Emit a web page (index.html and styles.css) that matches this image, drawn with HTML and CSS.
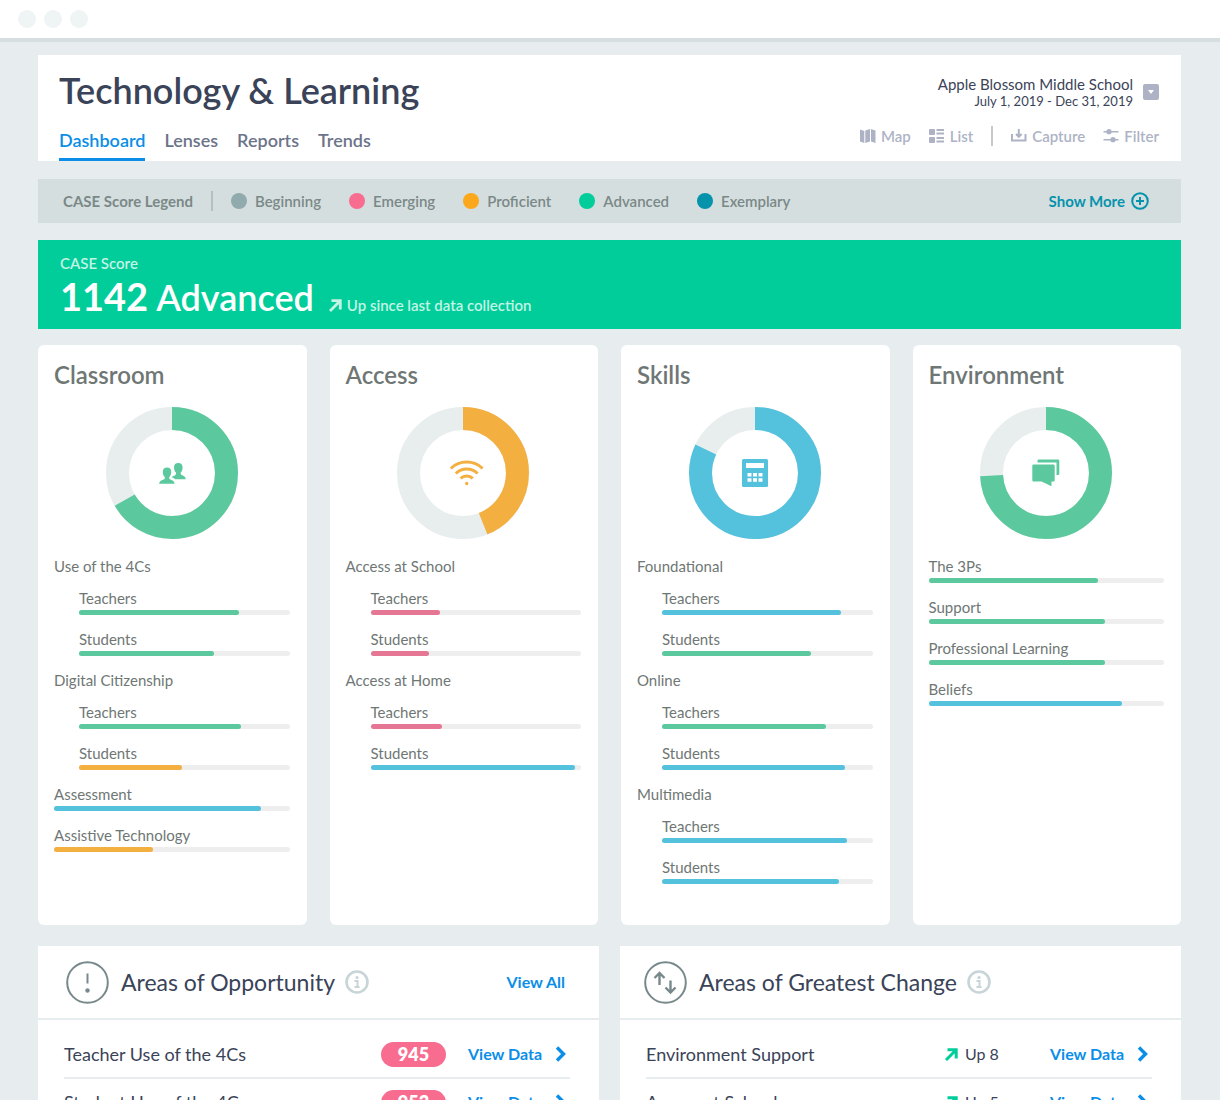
FILE: index.html
```
<!DOCTYPE html>
<html lang="en">
<head>
  <meta charset="UTF-8">
  <meta name="viewport" content="width=device-width, initial-scale=1">
  <title>Technology &amp; Learning - Dashboard</title>
  <link rel="stylesheet" href="styles.css">
</head>
<body>
  <div class="window-bar">
    <span class="window-dot"></span>
    <span class="window-dot"></span>
    <span class="window-dot"></span>
  </div>
  <div class="page">
    <header class="page-header">
      <div class="header-left">
        <h1>Technology &amp; Learning</h1>
        <nav class="tabs">
          <a class="active" href="#">Dashboard</a>
          <a href="#">Lenses</a>
          <a href="#">Reports</a>
          <a href="#">Trends</a>
        </nav>
      </div>
      <div class="header-right">
        <div class="school">
          <div class="school-text">
            <div class="school-name">Apple Blossom Middle School</div>
            <div class="school-dates">July 1, 2019 - Dec 31, 2019</div>
          </div>
          <button class="school-button" type="button" aria-label="Change school">
            <svg width="16" height="16" viewBox="0 0 16 16"><path d="M5 6h6l-3 4z" fill="#fff"/></svg>
          </button>
        </div>
        <div class="tools">
          <button type="button">
            <svg width="16" height="14" viewBox="0 0 16 14" fill="currentColor"><path d="M0 0.5L4.3 2v12L0 12.5zM5.3 1.5L10 0v12.5L5.3 14zM11 0l4.5 1.5V14L11 12.5z"/></svg>
            Map
          </button>
          <button type="button">
            <svg width="16" height="14" viewBox="0 0 16 14" fill="currentColor"><rect width="6" height="6" rx="1"/><rect y="8" width="6" height="6" rx="1"/><path d="M7.5 0H15v2H7.5zM7.5 3.5H15v2H7.5zM7.5 8H15v2H7.5zM7.5 11.5H15v2H7.5z"/></svg>
            List
          </button>
          <span class="tools-divider"></span>
          <button type="button">
            <svg width="16" height="14" viewBox="0 0 16 14" fill="none" stroke="currentColor" stroke-width="2"><path d="M1 5v6.500h13.500V5M7.800 0v7.500M5 5l2.800 2.800L10.600 5"/></svg>
            Capture
          </button>
          <button type="button">
            <svg width="16" height="14" viewBox="0 0 16 14" fill="currentColor"><path d="M0.500 2h15v1.600h-15zM0.500 10h15v1.600h-15z"/><circle cx="6" cy="2.700" r="2.600"/><circle cx="10" cy="10.700" r="2.600"/></svg>
            Filter
          </button>
        </div>
      </div>
    </header>

    <section class="legend">
      <span class="legend-title">CASE Score Legend</span>
      <ul class="legend-list">
        <li><span class="legend-dot beginning"></span>Beginning</li>
        <li><span class="legend-dot emerging"></span>Emerging</li>
        <li><span class="legend-dot proficient"></span>Proficient</li>
        <li><span class="legend-dot advanced"></span>Advanced</li>
        <li><span class="legend-dot exemplary"></span>Exemplary</li>
      </ul>
      <button class="show-more" type="button">
        Show More
        <svg width="18" height="18" viewBox="0 0 18 18" fill="none" stroke="currentColor" stroke-width="2"><circle cx="9" cy="9" r="7.8"/><path d="M9 5v8M5 9h8"/></svg>
      </button>
    </section>

    <section class="score">
      <div class="score-label">CASE Score</div>
      <div class="score-line">
        <span class="score-number">1142</span>
        <span class="score-level">Advanced</span>
        <span class="score-trend"><svg width="13" height="13" viewBox="0 0 13 13" fill="none" stroke="currentColor" stroke-width="2.800"><path d="M1 12l9.500-9.500M2.500 1.700h8.800V10.500"/></svg>Up since last data collection</span>
      </div>
    </section>

    <section class="cards">
      <article class="card">
        <h2>Classroom</h2>
        <svg class="donut c-green" viewBox="0 0 132 132">
          <circle class="donut-track" cx="66" cy="66" r="54.5"/>
          <circle class="donut-value" cx="66" cy="66" r="54.5" pathLength="100" stroke-dasharray="66.7 100" transform="rotate(-90 66 66)"/>
          <path fill="currentColor" d="M61 60.500c2.600 0 4.200 1.500 4.200 4.200 0 2.500-.8 4.300-1.900 5.400v1.400c.4 1.500 5.200 1.500 5.200 5.200H53.200c0-3.700 5.200-3.700 5.600-5.200v-1.400c-1.200-1.100-2-2.900-2-5.400 0-2.700 1.600-4.200 4.200-4.200z"/>
          <path fill="currentColor" d="M72.300 56c2.700 0 4.300 1.500 4.300 4.200 0 2.500-.8 4.300-1.900 5.400V67c.4 1.500 5 1.500 5 5.200H69c-.7-1-2-1.600-3.500-2 1.500-1.300 4.200-1.700 4.500-3.200v-1.400c-1.200-1.100-2-2.900-2-5.400 0-2.700 1.600-4.200 4.300-4.200z"/>
        </svg>
        <div class="metrics">
          <div class="group">
            <h3>Use of the 4Cs</h3>
            <div class="metric"><span>Teachers</span><div class="bar c-green"><i style="width: 76%"></i></div></div>
            <div class="metric"><span>Students</span><div class="bar c-green"><i style="width: 64%"></i></div></div>
          </div>
          <div class="group">
            <h3>Digital Citizenship</h3>
            <div class="metric"><span>Teachers</span><div class="bar c-green"><i style="width: 77%"></i></div></div>
            <div class="metric"><span>Students</span><div class="bar c-orange"><i style="width: 49%"></i></div></div>
          </div>
          <div class="metric"><span>Assessment</span><div class="bar c-blue"><i style="width: 88%"></i></div></div>
          <div class="metric"><span>Assistive Technology</span><div class="bar c-orange"><i style="width: 42%"></i></div></div>
        </div>
      </article>

      <article class="card">
        <h2>Access</h2>
        <svg class="donut c-orange" viewBox="0 0 132 132">
          <circle class="donut-track" cx="66" cy="66" r="54.5"/>
          <circle class="donut-value" cx="66" cy="66" r="54.5" pathLength="100" stroke-dasharray="44 100" transform="rotate(-90 66 66)"/>
          <g fill="none" stroke="currentColor" stroke-width="3">
            <path d="M53.800 61.500a23 23 0 0 1 31.800 0M58.800 66.500a15.500 15.500 0 0 1 21.800 0M63.600 71.300a9 9 0 0 1 12.200 0"/>
          </g>
          <circle cx="69.700" cy="76.500" r="1.700" fill="currentColor"/>
        </svg>
        <div class="metrics">
          <div class="group">
            <h3>Access at School</h3>
            <div class="metric"><span>Teachers</span><div class="bar c-pink"><i style="width: 33%"></i></div></div>
            <div class="metric"><span>Students</span><div class="bar c-pink"><i style="width: 28%"></i></div></div>
          </div>
          <div class="group">
            <h3>Access at Home</h3>
            <div class="metric"><span>Teachers</span><div class="bar c-pink"><i style="width: 34%"></i></div></div>
            <div class="metric"><span>Students</span><div class="bar c-blue"><i style="width: 97%"></i></div></div>
          </div>
        </div>
      </article>

      <article class="card">
        <h2>Skills</h2>
        <svg class="donut c-blue" viewBox="0 0 132 132">
          <circle class="donut-track" cx="66" cy="66" r="54.5"/>
          <circle class="donut-value" cx="66" cy="66" r="54.5" pathLength="100" stroke-dasharray="82.1 100" transform="rotate(-90 66 66)"/>
          <rect x="53" y="52" width="26" height="28" rx="1.500" fill="currentColor"/>
          <path fill="#fff" d="M57 56h18v5H57zM58.500 66h4v3.500h-4zM64 66h4v3.500h-4zM69.500 66h4v3.500h-4zM58.500 71.300h4v3.500h-4zM64 71.300h4v3.500h-4zM69.500 71.300h4v3.500h-4z"/>
        </svg>
        <div class="metrics">
          <div class="group">
            <h3>Foundational</h3>
            <div class="metric"><span>Teachers</span><div class="bar c-blue"><i style="width: 85%"></i></div></div>
            <div class="metric"><span>Students</span><div class="bar c-green"><i style="width: 71%"></i></div></div>
          </div>
          <div class="group">
            <h3>Online</h3>
            <div class="metric"><span>Teachers</span><div class="bar c-green"><i style="width: 78%"></i></div></div>
            <div class="metric"><span>Students</span><div class="bar c-blue"><i style="width: 87%"></i></div></div>
          </div>
          <div class="group">
            <h3>Multimedia</h3>
            <div class="metric"><span>Teachers</span><div class="bar c-blue"><i style="width: 88%"></i></div></div>
            <div class="metric"><span>Students</span><div class="bar c-blue"><i style="width: 84%"></i></div></div>
          </div>
        </div>
      </article>

      <article class="card">
        <h2>Environment</h2>
        <svg class="donut c-green" viewBox="0 0 132 132">
          <circle class="donut-track" cx="66" cy="66" r="54.5"/>
          <circle class="donut-value" cx="66" cy="66" r="54.5" pathLength="100" stroke-dasharray="74.2 100" transform="rotate(-90 66 66)"/>
          <path fill="currentColor" d="M53.500 57.500h20a1.200 1.200 0 0 1 1.200 1.200v14.600a1.200 1.200 0 0 1-1.200 1.200H71.500v4.800l-10-4.800h-8a1.200 1.200 0 0 1-1.200-1.200V58.700a1.200 1.200 0 0 1 1.200-1.200z"/>
          <path fill="currentColor" d="M57.500 55.500v-1.800a1.200 1.200 0 0 1 1.200-1.200h19.400a1.200 1.200 0 0 1 1.200 1.200v13a1.200 1.200 0 0 1-1.200 1.200H76.500V55.500z"/>
        </svg>
        <div class="metrics">
          <div class="metric"><span>The 3Ps</span><div class="bar c-green"><i style="width: 72%"></i></div></div>
          <div class="metric"><span>Support</span><div class="bar c-green"><i style="width: 75%"></i></div></div>
          <div class="metric"><span>Professional Learning</span><div class="bar c-green"><i style="width: 75%"></i></div></div>
          <div class="metric"><span>Beliefs</span><div class="bar c-blue"><i style="width: 82%"></i></div></div>
        </div>
      </article>
    </section>

    <section class="panels">
      <article class="panel">
        <div class="panel-head">
          <svg class="panel-icon" viewBox="0 0 43 43" fill="none" stroke="currentColor" stroke-width="2"><circle cx="21.500" cy="21.500" r="20.300"/><path d="M21.500 12.500v10"/><circle cx="21.500" cy="29.500" r="2.200" fill="currentColor" stroke="none"/></svg>
          <h2>Areas of Opportunity</h2>
          <button class="info" type="button" aria-label="About areas of opportunity">
            <svg width="24" height="24" viewBox="0 0 24 24" fill="none" stroke="currentColor"><circle cx="12" cy="12" r="10.500" stroke-width="2.600"/><path d="M9.500 11h3v6M9.500 17h5" stroke-width="2"/><circle cx="12" cy="7.500" r="1.600" fill="currentColor" stroke="none"/></svg>
          </button>
          <a class="view-all" href="#">View All</a>
        </div>
        <ul class="rows">
          <li>
            <span class="row-name">Teacher Use of the 4Cs</span>
            <span class="pill">945</span>
            <a class="view-data" href="#">View Data
              <svg width="12" height="16" viewBox="0 0 12 16" fill="none" stroke="currentColor" stroke-width="3.400"><path d="M2 1.500L8.500 8 2 14.500"/></svg></a>
          </li>
          <li>
            <span class="row-name">Student Use of the 4Cs</span>
            <span class="pill">953</span>
            <a class="view-data" href="#">View Data
              <svg width="12" height="16" viewBox="0 0 12 16" fill="none" stroke="currentColor" stroke-width="3.400"><path d="M2 1.500L8.500 8 2 14.500"/></svg></a>
          </li>
        </ul>
      </article>

      <article class="panel">
        <div class="panel-head">
          <svg class="panel-icon" viewBox="0 0 43 43" fill="none" stroke="currentColor" stroke-width="2"><circle cx="21.500" cy="21.500" r="20.300"/><path d="M15.500 24V12.500M10.500 17l5-5 5 5M26.500 19.500V31M21.500 26.500l5 5 5-5" stroke-width="2.400"/></svg>
          <h2>Areas of Greatest Change</h2>
          <button class="info" type="button" aria-label="About areas of greatest change">
            <svg width="24" height="24" viewBox="0 0 24 24" fill="none" stroke="currentColor"><circle cx="12" cy="12" r="10.500" stroke-width="2.600"/><path d="M9.500 11h3v6M9.500 17h5" stroke-width="2"/><circle cx="12" cy="7.500" r="1.600" fill="currentColor" stroke="none"/></svg>
          </button>
        </div>
        <ul class="rows">
          <li>
            <span class="row-name">Environment Support</span>
            <span class="change">
              <svg width="13" height="13" viewBox="0 0 13 13" fill="none" stroke="currentColor" stroke-width="3"><path d="M1 12l9.500-9.500M2.500 1.800h8.700V10.500"/></svg>
              Up 8</span>
            <a class="view-data" href="#">View Data
              <svg width="12" height="16" viewBox="0 0 12 16" fill="none" stroke="currentColor" stroke-width="3.400"><path d="M2 1.500L8.500 8 2 14.500"/></svg></a>
          </li>
          <li>
            <span class="row-name">Access at School</span>
            <span class="change">
              <svg width="13" height="13" viewBox="0 0 13 13" fill="none" stroke="currentColor" stroke-width="3"><path d="M1 12l9.500-9.500M2.500 1.800h8.700V10.500"/></svg>
              Up 5</span>
            <a class="view-data" href="#">View Data
              <svg width="12" height="16" viewBox="0 0 12 16" fill="none" stroke="currentColor" stroke-width="3.400"><path d="M2 1.500L8.500 8 2 14.500"/></svg></a>
          </li>
        </ul>
      </article>
    </section>
  </div>
</body>
</html>
```
FILE: styles.css
```
* {
  box-sizing: border-box;
}
body {
  margin: 0;
  height: 100vh;
  overflow: hidden;
  background-color: #e7edef;
  color: #3a4358;
  font-family: Lato, "Liberation Sans", sans-serif;
  font-size: 15px;
  line-height: 20px;
}
h1, h2, h3, ul {
  margin: 0;
  padding: 0;
}
ul {
  list-style: none;
}
a {
  text-decoration: none;
}
button {
  padding: 0;
  border: none;
  background: none;
  color: inherit;
  font: inherit;
  cursor: pointer;
}
svg {
  display: block;
  flex: none;
}

/* Window bar */
.window-bar {
  display: flex;
  align-items: center;
  gap: 8px;
  height: 42px;
  padding: 0 18px;
  background-color: #fff;
  border-bottom: 4px solid #d7dedf;
}
.window-dot {
  width: 18px;
  height: 18px;
  border-radius: 50%;
  background-color: #eff4f5;
}

.page {
  padding: 13px 39px 0 38px;
}

/* Header */
.page-header {
  display: flex;
  justify-content: space-between;
  padding: 15px 22px 0 21px;
  background-color: #fff;
}
.page-header h1 {
  font-size: 36px;
  font-weight: 600;
  line-height: 40px;
}
.tabs {
  display: flex;
  gap: 19px;
  margin-top: 20px;
}
.tabs a {
  padding-bottom: 8px;
  border-bottom: 3px solid transparent;
  color: #6c7489;
  font-size: 18px;
  font-weight: 600;
}
.tabs a.active {
  color: #0a8ee8;
  border-bottom-color: #0a8ee8;
}
.header-right {
  display: flex;
  flex-direction: column;
  align-items: flex-end;
  padding-top: 5px;
}
.school {
  display: flex;
  align-items: center;
  gap: 10px;
  text-align: right;
}
.school-name {
  font-size: 15px;
  line-height: 18px;
}
.school-dates {
  font-size: 13px;
  line-height: 16px;
}
.school-button {
  width: 16px;
  height: 16px;
  border-radius: 2px;
  background-color: #adb3c5;
}
.tools {
  display: flex;
  align-items: center;
  gap: 18px;
  margin-top: 17px;
  color: #adb3c5;
}
.tools button {
  display: flex;
  align-items: center;
  gap: 5px;
  font-size: 15px;
  font-weight: 600;
}
.tools-divider {
  width: 2px;
  height: 20px;
  background-color: #c6c8cc;
}

/* Legend */
.legend {
  display: flex;
  align-items: center;
  height: 44px;
  margin-top: 18px;
  padding: 0 32px 0 25px;
  background-color: #d5dedf;
  color: #7a8987;
}
.legend-title {
  padding-right: 18px;
  border-right: 2px solid #b3c0c1;
  font-weight: 700;
}
.legend-list {
  display: flex;
  gap: 28px;
  padding-left: 18px;
  font-weight: 600;
}
.legend-list li {
  display: flex;
  align-items: center;
  gap: 8px;
}
.legend-dot {
  width: 16px;
  height: 16px;
  border-radius: 50%;
}
.beginning {
  background-color: #90aaae;
}
.emerging {
  background-color: #f86c8f;
}
.proficient {
  background-color: #fba81c;
}
.advanced {
  background-color: #00cd9a;
}
.exemplary {
  background-color: #0593ac;
}
.show-more {
  display: flex;
  align-items: center;
  gap: 6px;
  margin-left: auto;
  color: #0593ac;
  font-weight: 700;
}

/* Score banner */
.score {
  height: 89px;
  margin-top: 17px;
  padding: 13px 22px;
  background-color: #00cd9a;
  color: #fff;
}
.score-label {
  color: #c3f4e5;
  font-weight: 600;
}
.score-line {
  display: flex;
  align-items: baseline;
  line-height: 46px;
}
.score-number {
  font-size: 38px;
  font-weight: 700;
}
.score-level {
  margin-left: 8px;
  font-size: 36px;
  font-weight: 600;
}
.score-trend {
  margin-left: 15px;
  color: #c3f4e5;
  font-weight: 600;
  line-height: 20px;
}
.score-trend svg {
  display: inline-block;
  margin-right: 5px;
  vertical-align: -1px;
}

/* Cards */
.cards {
  display: grid;
  grid-template-columns: repeat(4, 1fr);
  gap: 23px;
  margin-top: 16px;
}
.card {
  min-height: 580px;
  padding: 16px 17px 40px 16px;
  border-radius: 6px;
  background-color: #fff;
  color: #6f7775;
}
.card h2 {
  font-size: 24px;
  font-weight: 600;
  line-height: 28px;
}
.donut {
  width: 132px;
  height: 132px;
  margin: 18px auto 17px;
}
.donut circle {
  stroke-width: 23;
}
.donut circle[fill] {
  stroke-width: 0;
}
.donut-track {
  fill: none;
  stroke: #e8eeee;
}
.donut-value {
  fill: none;
  stroke: currentColor;
}
.c-green {
  color: #5bc99d;
}
.c-orange {
  color: #f4af41;
}
.c-blue {
  color: #54c1dd;
}
.c-pink {
  color: #e67794;
}
.metrics,
.group {
  display: flex;
  flex-direction: column;
  gap: 14px;
}
.group h3 {
  margin-bottom: -2px;
  font-size: 15px;
  font-weight: 400;
  line-height: 20px;
}
.group .metric {
  margin-left: 25px;
}
.metric span {
  display: block;
  margin-bottom: 2px;
  color: #6f7775;
}
.bar {
  height: 5px;
  border-radius: 3px;
  background-color: #eee;
}
.bar i {
  display: block;
  height: 5px;
  border-radius: 3px;
  background-color: currentColor;
}

/* Panels */
.panels {
  display: grid;
  grid-template-columns: 1fr 1fr;
  gap: 21px;
  margin-top: 21px;
}
.panel {
  background-color: #fff;
}
.panel-head {
  display: flex;
  align-items: center;
  height: 74px;
  padding: 0 34px 0 28px;
  border-bottom: 2px solid #e7edef;
}
.panel:last-child .panel-head {
  padding-left: 24px;
}
.panel-icon {
  width: 43px;
  height: 43px;
  color: #78898b;
}
.panel h2 {
  margin-left: 12px;
  font-size: 23px;
  font-weight: 400;
  line-height: 28px;
}
.info {
  margin-left: 10px;
  color: #c8d5d8;
}
.view-all,
.view-data {
  color: #0a8ee8;
  font-size: 16px;
  font-weight: 700;
}
.view-all {
  margin-left: auto;
}
.rows {
  padding: 11px 29px 0 26px;
}
.rows li {
  display: flex;
  align-items: center;
  height: 48px;
  border-bottom: 2px solid #e7edef;
}
.row-name {
  flex: 1;
  font-size: 18px;
}
.pill {
  width: 65px;
  margin-right: 22px;
  border-radius: 13px;
  background-color: #f86c8f;
  color: #fff;
  font-size: 18px;
  font-weight: 800;
  line-height: 25px;
  text-align: center;
}
.change {
  display: flex;
  align-items: center;
  gap: 7px;
  width: 105px;
  font-size: 16px;
}
.change svg {
  color: #00cd9a;
}
.view-data {
  display: flex;
  align-items: center;
  justify-content: space-between;
  width: 102px;
  padding-right: 3px;
}
```
